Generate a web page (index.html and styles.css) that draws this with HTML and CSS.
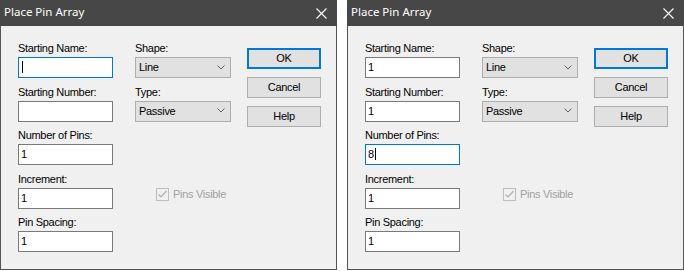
FILE: index.html
```html
<!DOCTYPE html>
<html lang="en">
<head>
<meta charset="UTF-8">
<title>Place Pin Array</title>
<link rel="stylesheet" href="styles.css">
</head>
<body>

<div class="screen">

    <!-- before typing -->
    <div class="dialog">
        <div class="titlebar">
            <span class="title">Place Pin Array</span>
            <svg class="close" width="11" height="11" viewBox="0 0 11 11"><path d="M0.5 0.5L10.5 10.5M10.5 0.5L0.5 10.5" stroke="#fff" stroke-width="1.1" fill="none"/></svg>
        </div>
        <div class="content">
            <div class="col fields">
                <div class="label">Starting Name:</div>
                <div class="edit focus"><span class="caret"></span></div>
                <div class="label">Starting Number:</div>
                <div class="edit"></div>
                <div class="label">Number of Pins:</div>
                <div class="edit">1</div>
                <div class="label">Increment:</div>
                <div class="edit">1</div>
                <div class="label">Pin Spacing:</div>
                <div class="edit">1</div>
            </div>
            <div class="col options">
                <div class="label">Shape:</div>
                <div class="combo"><span>Line</span><svg width="8" height="5" viewBox="0 0 8 5"><path d="M0.5 0.5L4 4L7.5 0.5" stroke="#606060" fill="none"/></svg></div>
                <div class="label">Type:</div>
                <div class="combo"><span>Passive</span><svg width="8" height="5" viewBox="0 0 8 5"><path d="M0.5 0.5L4 4L7.5 0.5" stroke="#606060" fill="none"/></svg></div>
                <div class="check">
                    <svg class="box" width="13" height="13" viewBox="0 0 13 13"><rect x="0.5" y="0.5" width="12" height="12" fill="#f0f0f0" stroke="#bcbcbc"/><path d="M2.5 6.5L5 9L10.5 3" stroke="#b0b0b0" stroke-width="1.2" fill="none"/></svg>
                    <span>Pins Visible</span>
                </div>
            </div>
            <div class="col buttons">
                <div class="btn default">OK</div>
                <div class="btn">Cancel</div>
                <div class="btn">Help</div>
            </div>
        </div>
    </div>

    <!-- after typing -->
    <div class="dialog">
        <div class="titlebar">
            <span class="title">Place Pin Array</span>
            <svg class="close" width="11" height="11" viewBox="0 0 11 11"><path d="M0.5 0.5L10.5 10.5M10.5 0.5L0.5 10.5" stroke="#fff" stroke-width="1.1" fill="none"/></svg>
        </div>
        <div class="content">
            <div class="col fields">
                <div class="label">Starting Name:</div>
                <div class="edit">1</div>
                <div class="label">Starting Number:</div>
                <div class="edit">1</div>
                <div class="label">Number of Pins:</div>
                <div class="edit focus">8<span class="caret"></span></div>
                <div class="label">Increment:</div>
                <div class="edit">1</div>
                <div class="label">Pin Spacing:</div>
                <div class="edit">1</div>
            </div>
            <div class="col options">
                <div class="label">Shape:</div>
                <div class="combo"><span>Line</span><svg width="8" height="5" viewBox="0 0 8 5"><path d="M0.5 0.5L4 4L7.5 0.5" stroke="#606060" fill="none"/></svg></div>
                <div class="label">Type:</div>
                <div class="combo"><span>Passive</span><svg width="8" height="5" viewBox="0 0 8 5"><path d="M0.5 0.5L4 4L7.5 0.5" stroke="#606060" fill="none"/></svg></div>
                <div class="check">
                    <svg class="box" width="13" height="13" viewBox="0 0 13 13"><rect x="0.5" y="0.5" width="12" height="12" fill="#f0f0f0" stroke="#bcbcbc"/><path d="M2.5 6.5L5 9L10.5 3" stroke="#b0b0b0" stroke-width="1.2" fill="none"/></svg>
                    <span>Pins Visible</span>
                </div>
            </div>
            <div class="col buttons">
                <div class="btn default">OK</div>
                <div class="btn">Cancel</div>
                <div class="btn">Help</div>
            </div>
        </div>
    </div>

</div>

</body>
</html>
```

FILE: styles.css
```css
body {
    margin: 0;
    padding: 0;
    background: #fff;
    font-family: "Liberation Sans", Arial, sans-serif;
    font-size: 11px;
    letter-spacing: -0.3px;
    color: #000;
}
.screen {
    display: flex;
    gap: 10px;
}

/* dialog frame */
.dialog {
    width: 337px;
    height: 270px;
    box-sizing: border-box;
    border: 1px solid #555;
    border-top: none;
    background: #f0f0f0;
    display: flex;
    flex-direction: column;
}
.titlebar {
    height: 26px;
    margin: 0 -1px;
    background: #474747;
    display: flex;
    align-items: center;
}
.title {
    font-family: "Noto Sans", "Open Sans", sans-serif;
    font-size: 11.5px;
    letter-spacing: 0;
    color: #fff;
    line-height: 24px;
    padding: 0 0 2px 4px;
}
.close {
    margin-left: auto;
    margin-right: 10px;
    margin-top: 1px;
}

/* three columns */
.content {
    display: flex;
    padding: 15px 0 0 17px;
}
.col {
    display: flex;
    flex-direction: column;
}
.fields {
    width: 95px;
}
.options {
    width: 96px;
    margin-left: 22px;
}
.buttons {
    width: 74px;
    margin-left: 16px;
    padding-top: 7px;
    gap: 8px;
}

.label {
    height: 14px;
    line-height: 14px;
    margin-bottom: 2px;
    white-space: nowrap;
}
.edit,
.combo {
    height: 21px;
    box-sizing: border-box;
    margin-bottom: 6.5px;
    line-height: 18px;
    padding-bottom: 1px;
}
.edit {
    background: #fff;
    border: 1px solid #7a7a7a;
    padding-left: 2px;
}
.edit.focus {
    border-color: #0078d7;
}
.caret {
    display: inline-block;
    width: 1px;
    height: 12px;
    background: #000;
    vertical-align: -2px;
    margin-left: 1px;
}
.combo {
    background: #e1e1e1;
    border: 1px solid #adadad;
    padding-left: 3px;
    padding-right: 5px;
    display: flex;
    align-items: center;
    justify-content: space-between;
}

.check {
    display: flex;
    align-items: center;
    gap: 4px;
    margin-top: 59px;
    padding-left: 21px;
    height: 14px;
    color: #a0a0a0;
}

.btn {
    height: 21px;
    box-sizing: border-box;
    background: #e1e1e1;
    border: 1px solid #adadad;
    text-align: center;
    line-height: 18px;
}
.btn.default {
    border: 2px solid #0078d7;
    line-height: 16px;
}
```
